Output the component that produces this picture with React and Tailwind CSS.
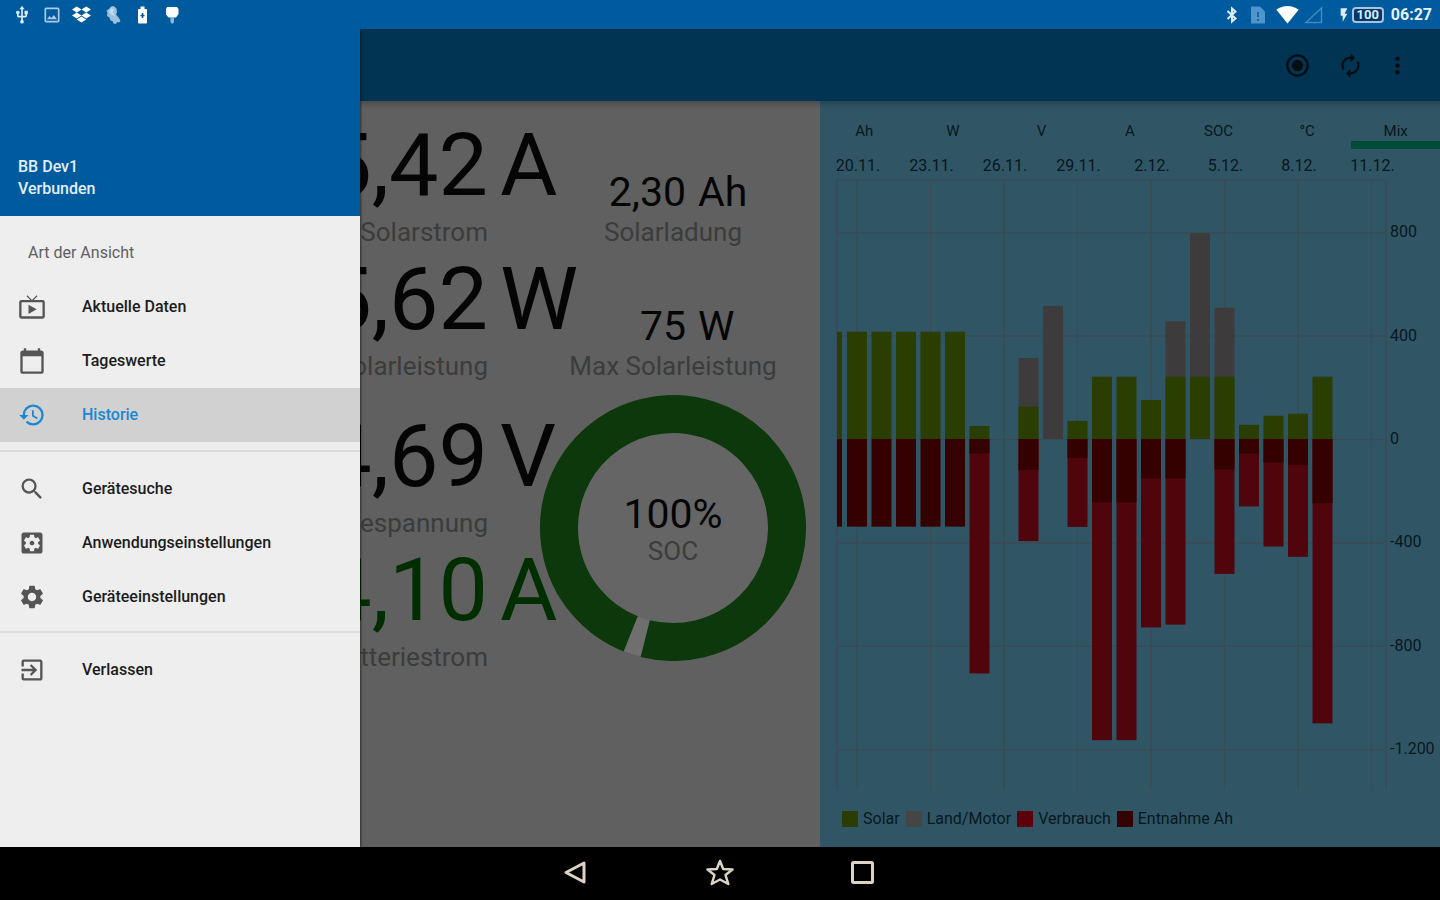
import React from "react";
import {
  MdUsb,
  MdOutlinePhoto,
  MdSignalWifi4Bar,
  MdFlashOn,
  MdRadioButtonChecked,
  MdAutorenew,
  MdMoreVert,
  MdLiveTv,
  MdCalendarToday,
  MdHistory,
  MdSearch,
  MdSettings,
  MdExitToApp,
} from "react-icons/md";
import { FaDropbox } from "react-icons/fa";

function AppSettingsIcon({ size, className }) {
  return (
    <svg width={size} height={size} viewBox="0 0 24 24" fill="currentColor" className={className}>
      <path d="M12 10c-1.100 0-2 .9-2 2s.9 2 2 2 2-.9 2-2-.9-2-2-2zm7-7H5c-1.110 0-2 .9-2 2v14c0 1.100.89 2 2 2h14c1.110 0 2-.9 2-2V5c0-1.100-.89-2-2-2zm-1.750 9c0 .23-.02.46-.05.68l1.480 1.160c.13.11.17.3.08.45l-1.400 2.420c-.09.15-.27.21-.43.15l-1.740-.7c-.36.28-.76.51-1.180.69l-.26 1.850c-.03.17-.18.3-.35.3h-2.800c-.17 0-.32-.13-.35-.29l-.26-1.850c-.43-.18-.82-.41-1.180-.69l-1.740.7c-.16.06-.34 0-.43-.15l-1.400-2.420c-.09-.15-.05-.34.08-.45l1.480-1.160c-.03-.23-.05-.46-.05-.69 0-.23.02-.46.05-.68l-1.480-1.160c-.13-.11-.17-.3-.08-.45l1.400-2.420c.09-.15.27-.21.43-.15l1.740.7c.36-.28.76-.51 1.180-.69l.26-1.850c.03-.17.18-.3.35-.3h2.800c.17 0 .32.13.35.29l.26 1.850c.43.18.82.41 1.180.69l1.740-.7c.16-.06.34 0 .43.15l1.400 2.420c.09.15.05.34-.08.45l-1.480 1.160c.03.23.05.46.05.69z" />
    </svg>
  );
}

function StatusBar() {
  return (
    <div className="flex h-[29px] shrink-0 items-center justify-between bg-[#005a9e] pr-2 pl-3 text-[#dcecfa]">
      <div className="flex items-center gap-[10px]">
        <MdUsb size={20} />
        <MdOutlinePhoto size={20} className="text-[#a9cbe8]" />
        <FaDropbox size={19} className="text-white" />
        <svg className="ml-[2px]" width="20" height="20" viewBox="0 0 20 20" fill="currentColor">
          <path d="M8 1.5 10.500 1l3 2.500.5 4-1 2 3 3.500 1.500 3-1.500 1.500-2-.5-1 2-2.500-.5-1-2.500-2-.5-1-3L4 11l.5-3L3.500 5.500 6 4z" opacity=".7" />
          <path d="M8 3l3 1-1 3 2 4-3-1-3-3z" opacity=".6" />
        </svg>
        <svg width="19" height="20" viewBox="0 0 19 20">
          <path d="M7.500 1.500h4V4H13q1 0 1 1v12.500q0 1-1 1H6q-1 0-1-1V5q0-1 1-1h1.500z" fill="#ffffff" />
          <path d="M9.500 8v5M7.500 10.500h4" stroke="#005a9e" strokeWidth="1.600" />
        </svg>
        <svg width="20" height="20" viewBox="0 0 20 20">
          <path d="M5 2h10l1.500 2v5L14 12.500H6.500L4 9.500V4z" fill="#ffffff" />
          <path d="M8.500 12h3.500v5L11 18.500H9.500L8.500 17z" fill="#8fb6d8" />
        </svg>
      </div>
      <div className="flex items-center">
        <svg width="20" height="18" viewBox="0 0 20 18" fill="none" stroke="currentColor" strokeWidth="2">
          <path d="M5.500 5 13.500 12.500 10 15.500V2.500L13.500 5.500 5.500 13" />
        </svg>
        <svg className="ml-[8px]" width="16" height="20" viewBox="0 0 16 20">
          <path d="M1 1.500h9l5 5V18.500H1z" fill="#4f94ca" />
          <path d="M8 7v5M8 14v2" stroke="#1767a8" strokeWidth="2" />
        </svg>
        <MdSignalWifi4Bar size={23} className="ml-[10px] text-white" />
        <svg className="ml-[5px]" width="20" height="20" viewBox="0 0 20 20">
          <path d="M2 17.500 17.500 3v14.500z" fill="none" stroke="#3f88c4" strokeWidth="1.500" />
        </svg>
        <MdFlashOn size={16} className="ml-3" />
        <div className="flex h-4 w-8 items-center justify-center rounded-[4px] border-2 border-[#a9c2dc] bg-[#00376c] font-['Roboto',sans-serif] text-[13px] leading-none font-bold">
          100
        </div>
        <time className="ml-[7px] font-['Roboto',sans-serif] text-[16px] leading-5 font-bold text-[#e8f2fb]">06:27</time>
      </div>
    </div>
  );
}

function AppBar() {
  return (
    <header className="flex h-[72px] items-center justify-end bg-[#003452] pr-[29px] text-[#060d12]">
      <button aria-label="Aufzeichnen" className="mr-[26px]">
        <MdRadioButtonChecked size={27} />
      </button>
      <button aria-label="Aktualisieren" className="mr-[20px]">
        <MdAutorenew size={27} />
      </button>
      <button aria-label="Mehr">
        <MdMoreVert size={27} />
      </button>
    </header>
  );
}

const LABEL = "text-[26px] leading-8 text-[#3c3c3c]";

function LargeReading({ value, unit, label, green }) {
  return (
    <div className="h-[134px]">
      <div
        className={`grid grid-cols-[488px_1fr] gap-x-3 text-[88px] leading-[88px] whitespace-nowrap ${
          green ? "text-[#002e00]" : "text-[#050505]"
        }`}
      >
        <span className="text-right">{value}</span>
        <span>{unit}</span>
      </div>
      <div className={`mt-[7px] w-[488px] text-right ${LABEL}`}>{label}</div>
    </div>
  );
}

function SmallReading({ value, unit, label }) {
  return (
    <div className="h-[134px] pt-12">
      <div className="grid grid-cols-2 gap-x-[12px] pl-[38px] text-[41px] leading-[47px] text-[#050505]">
        <span className="text-right">{value}</span>
        <span>{unit}</span>
      </div>
      <div className={`text-center whitespace-nowrap ${LABEL}`}>{label}</div>
    </div>
  );
}

function polar(deg, r) {
  const a = (deg * Math.PI) / 180;
  return `${133 + r * Math.sin(a)} ${133 - r * Math.cos(a)}`;
}

// Ring with a narrow opening between the two angles, measured clockwise from the top
const RING_START = 201.8;
const RING_END = 194.1;

function ChargeRing() {
  return (
    <div className="mt-[6px] grid place-items-center">
      <svg className="col-start-1 row-start-1" width="266" height="266" viewBox="0 0 266 266">
        <circle cx="133" cy="133" r="96" fill="#656565" />
        <circle cx="133" cy="133" r="114" fill="none" stroke="#6f6f6f" strokeWidth="37" />
        <path
          d={`M${polar(RING_START, 114)}A114 114 0 1 1 ${polar(RING_END, 114)}`}
          fill="none"
          stroke="#0c380c"
          strokeWidth="38"
        />
      </svg>
      <div className="col-start-1 row-start-1 text-center">
        <div className="pt-1 text-[41px] leading-[42px] text-[#050505]">100%</div>
        <div className={LABEL}>SOC</div>
      </div>
    </div>
  );
}

function Readings() {
  return (
    <section className="flex min-w-0 flex-[41] bg-[#606060] pt-5 font-['Roboto',sans-serif]">
      <div className="w-[540px] shrink-0">
        <LargeReading value="5,42" unit="A" label="Solarstrom" />
        <LargeReading value="75,62" unit="W" label="Solarleistung" />
        <div className="h-[23px]" />
        <LargeReading value="14,69" unit="V" label="Batteriespannung" />
        <LargeReading value="4,10" unit="A" label="Batteriestrom" green />
      </div>
      <div className="relative min-w-0 flex-1 pr-[14px]">
        <SmallReading value="2,30" unit="Ah" label="Solarladung" />
        <SmallReading value="75" unit="W" label="Max Solarleistung" />
        <ChargeRing />
      </div>
    </section>
  );
}

// Day slots, each [solar, land/motor total, entnahme, verbrauch total] in Ah
const DAYS = [
  [415, 0, 339, 0],
  [415, 0, 339, 0],
  [415, 0, 339, 0],
  [415, 0, 339, 0],
  [415, 0, 339, 0],
  [50, 0, 56, 907],
  [0, 0, 0, 0],
  [125, 313, 120, 395],
  [0, 515, 0, 0],
  [70, 0, 73, 340],
  [241, 0, 245, 1165],
  [241, 0, 245, 1165],
  [151, 0, 152, 729],
  [241, 455, 152, 718],
  [241, 797, 0, 0],
  [241, 508, 118, 522],
  [55, 0, 56, 261],
  [90, 0, 91, 416],
  [98, 0, 101, 456],
  [241, 0, 248, 1100],
];
const DATES = ["20.11.", "23.11.", "26.11.", "29.11.", "2.12.", "5.12.", "8.12.", "11.12."];
const LEVELS = [
  [800, "800"],
  [400, "400"],
  [0, "0"],
  [-400, "-400"],
  [-800, "-800"],
  [-1200, "-1.200"],
];
const ZERO = 289;
const SCALE = 0.2585;

function DayBar({ x, width, day }) {
  const [solar, land, ent, verb] = day;
  return (
    <g>
      {land > 0 && <rect x={x} width={width} y={ZERO - land * SCALE} height={land * SCALE} fill="#3d3b3b" />}
      {verb > 0 && <rect x={x} width={width} y={ZERO} height={verb * SCALE} fill="#50050d" />}
      {solar > 0 && <rect x={x} width={width} y={ZERO - solar * SCALE} height={solar * SCALE} fill="#293e00" />}
      {ent > 0 && <rect x={x} width={width} y={ZERO} height={ent * SCALE} fill="#340000" />}
    </g>
  );
}

function HistoryChart() {
  return (
    <svg className="block w-full" viewBox="0 0 620 650" fontSize="16" fill="#07161d" role="img" aria-label="Historie">
      <g stroke="#3b4b55" strokeWidth="1.500">
        <path d="M17 30H566M17 30V640M566 30V640" fill="none" />
        {DATES.map((d, i) => (
          <line key={d} x1={37 + i * 73.5} x2={37 + i * 73.5} y1="30" y2="640" />
        ))}
        {LEVELS.map(([v]) => (
          <line key={v} x1="17" x2="566" y1={ZERO + 0.5 - v * SCALE} y2={ZERO + 0.5 - v * SCALE} />
        ))}
      </g>
      {DATES.map((d, i) => (
        <text key={d} x={38 + i * 73.5} y="21" textAnchor="middle">
          {d}
        </text>
      ))}
      {LEVELS.map(([v, text]) => (
        <text key={text} x="570" y={ZERO + 5 - v * SCALE}>
          {text}
        </text>
      ))}
      <DayBar x={17} width={5} day={[415, 0, 339, 0]} />
      {DAYS.map((day, i) => (
        <DayBar key={i} x={27 + i * 24.5} width={20} day={day} />
      ))}
    </svg>
  );
}

const TABS = ["Ah", "W", "V", "A", "SOC", "°C", "Mix"];

function History() {
  return (
    <section className="min-w-0 flex-[31] bg-[#305666] font-['Roboto',sans-serif] text-[#07161d]">
      <div className="grid h-[49px] grid-cols-7 pt-[20px]">
        {TABS.map((t) => (
          <button
            key={t}
            className={`h-7 border-b-8 text-[15px] leading-5 ${
              t === "Mix" ? "border-[#004c38]" : "border-transparent"
            }`}
          >
            {t}
          </button>
        ))}
      </div>
      <HistoryChart />
      <ul className="flex items-center gap-[6px] pt-[9px] pl-[22px] text-[16px] leading-5">
        <li className="flex items-center gap-[5px]"><span className="size-4 bg-[#293e00]" />Solar</li>
        <li className="flex items-center gap-[5px]"><span className="size-4 bg-[#454545]" />Land/Motor</li>
        <li className="flex items-center gap-[5px]"><span className="size-4 bg-[#5c000c]" />Verbrauch</li>
        <li className="flex items-center gap-[5px]"><span className="size-4 bg-[#340000]" />Entnahme Ah</li>
      </ul>
    </section>
  );
}

function MenuItem({ icon: Icon, active, children }) {
  return (
    <li>
      <a
        href="#"
        className={`flex h-[54px] items-center gap-9 pl-[18px] text-[16px] font-medium ${
          active ? "bg-[#d1d1d1] text-[#1b87d2]" : "text-[#1c1c1c]"
        }`}
      >
        <Icon size={28} className={active ? "text-[#1b87d2]" : "text-[#555555]"} />
        {children}
      </a>
    </li>
  );
}

function Drawer() {
  return (
    <aside className="absolute inset-y-0 left-0 w-[360px] bg-[#eeeeee] font-['Roboto',sans-serif] shadow-[1px_0_2px_#00000080]">
      <div className="flex h-[187px] flex-col justify-end bg-[#005a9e] pb-4 pl-[18px] text-[16px] leading-[22px] font-medium text-[#e3eefa]">
        <p>BB Dev1</p>
        <p>Verbunden</p>
      </div>
      <nav>
        <h2 className="h-16 pt-[26px] pl-7 text-[16px] leading-[22px] text-[#606060]">Art der Ansicht</h2>
        <ul className="pb-2">
          <MenuItem icon={MdLiveTv}>Aktuelle Daten</MenuItem>
          <MenuItem icon={MdCalendarToday}>Tageswerte</MenuItem>
          <MenuItem icon={MdHistory} active>Historie</MenuItem>
        </ul>
        <ul className="border-t-2 border-[#dadada] pt-[10px] pb-[7px]">
          <MenuItem icon={MdSearch}>Gerätesuche</MenuItem>
          <MenuItem icon={AppSettingsIcon}>Anwendungseinstellungen</MenuItem>
          <MenuItem icon={MdSettings}>Geräteeinstellungen</MenuItem>
        </ul>
        <ul className="border-t-2 border-[#dadada] pt-[10px]">
          <MenuItem icon={MdExitToApp}>Verlassen</MenuItem>
        </ul>
      </nav>
    </aside>
  );
}

function NavBar() {
  return (
    <div className="flex h-[53px] shrink-0 justify-center gap-[113px] bg-black pt-[10px] text-[#dcd3c4]">
      <button aria-label="Zurück" className="h-[30px]">
        <svg width="30" height="30" viewBox="0 0 30 30" fill="none" stroke="currentColor" strokeWidth="3" strokeLinejoin="round">
          <path d="M4 15.500 22 6v19z" />
        </svg>
      </button>
      <button aria-label="Start" className="h-[30px]">
        <svg width="30" height="30" viewBox="0 0 30 30" fill="none" stroke="currentColor" strokeWidth="2.500" strokeLinejoin="round">
          <path d="m15 4 3.200 8 9.300.5-7 5.500 2.800 9L15 22.500 6.700 27l2.800-9-7-5.500 9.300-.5z" />
        </svg>
      </button>
      <button aria-label="Übersicht" className="h-[30px]">
        <svg width="30" height="30" viewBox="0 0 30 30" fill="none" stroke="currentColor" strokeWidth="3">
          <rect x="4.500" y="5.500" width="20" height="20" rx="1" />
        </svg>
      </button>
    </div>
  );
}

export default function App() {
  return (
    <div className="flex min-h-screen flex-col bg-black">
      <StatusBar />
      <div className="relative flex flex-1 flex-col overflow-hidden">
        <AppBar />
        <main className="relative flex flex-1">
          <Readings />
          <History />
          <div className="pointer-events-none absolute inset-x-0 top-0 h-2 bg-linear-to-b from-black/20 to-transparent" />
        </main>
        <Drawer />
      </div>
      <NavBar />
    </div>
  );
}
